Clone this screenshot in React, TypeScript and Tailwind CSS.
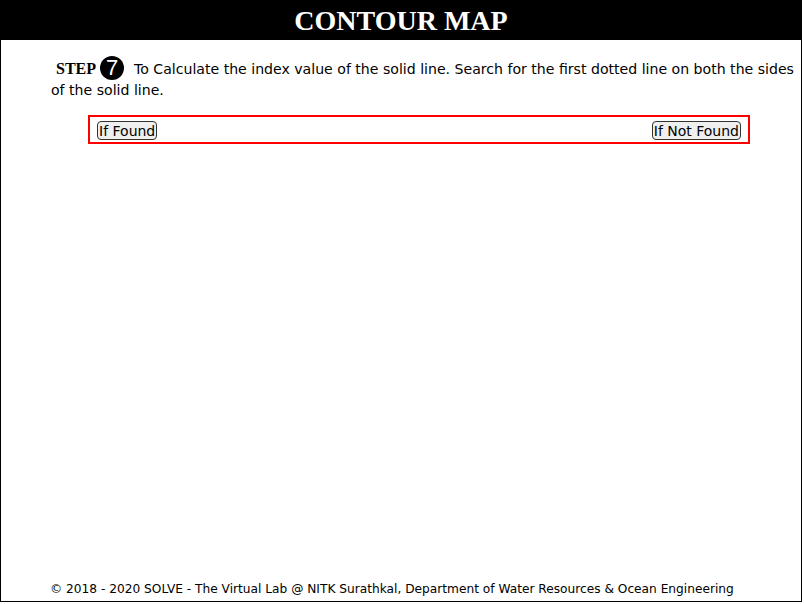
export default function App() {
  return (
    <div className="w-[802px] h-[602px] border border-black flex flex-col bg-white">
      {/* Title bar */}
      <div className="h-[39px] bg-black flex items-center justify-center">
        <h1 className="text-white font-bold text-[28px] leading-none font-['Liberation_Serif',serif] pt-[1px]">
          CONTOUR MAP
        </h1>
      </div>

      {/* Step text */}
      <div className="pl-[50px] pr-[4px] pt-[18px] text-[14.1px] leading-[21px] text-black font-['DejaVu_Sans',sans-serif]">
        <span className="inline-block w-[5px]" />
        <span className="font-bold text-[16px] font-['Liberation_Serif',serif]">STEP</span>
        <span className="inline-flex items-center justify-center w-[24px] h-[24px] rounded-full bg-black text-white text-[22px] leading-none font-['Liberation_Sans',sans-serif] align-middle ml-[4px] mr-[10px] -mt-[5px]">
          7
        </span>
        To Calculate the index value of the solid line. Search for the first dotted line on both the sides of the solid line.
      </div>

      {/* Choice box */}
      <div className="ml-[87px] w-[662px] mt-[14px] border-2 border-[#ff0000] h-[29px] flex items-start justify-between px-[7px] pt-[4px]">
        <button className="border border-[#333] rounded-[4px] bg-[#efefef] px-[1px] h-[19px] text-[14px] leading-none font-['DejaVu_Sans',sans-serif] text-black">
          If Found
        </button>
        <button className="border border-[#333] rounded-[4px] bg-[#efefef] px-[1px] h-[19px] text-[14px] leading-none font-['DejaVu_Sans',sans-serif] text-black">
          If Not Found
        </button>
      </div>

      {/* Footer */}
      <div className="mt-auto pb-[4px] pl-[49px] text-[12.2px] leading-[16px] text-black font-['DejaVu_Sans',sans-serif]">
        © 2018 - 2020 SOLVE - The Virtual Lab @ NITK Surathkal, Department of Water Resources &amp; Ocean Engineering
      </div>
    </div>
  );
}
